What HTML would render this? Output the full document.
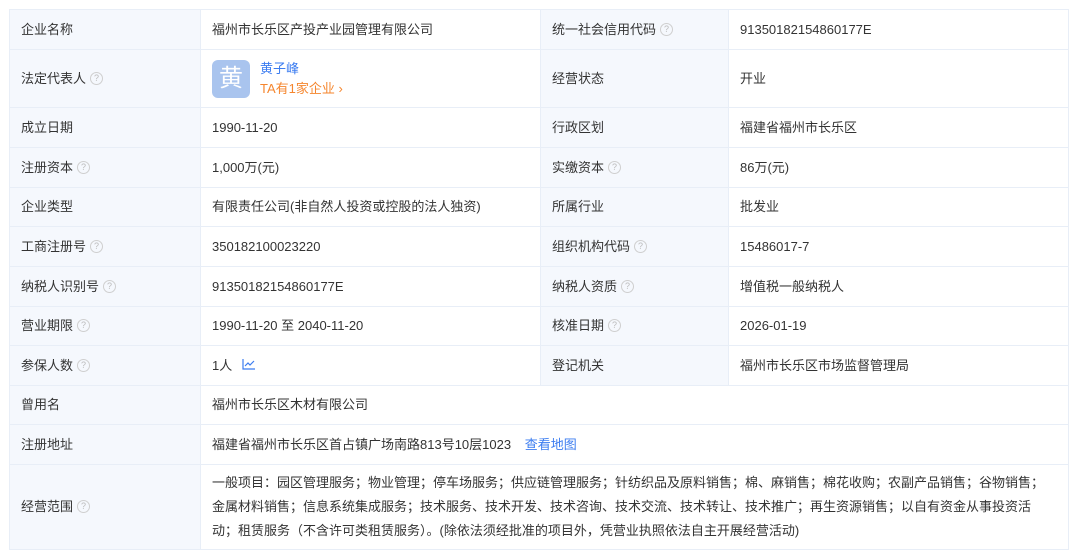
<!DOCTYPE html>
<html><head><meta charset="utf-8"><style>
body{margin:0;background:#fff;width:1080px;height:555px;overflow:hidden;font-family:"Liberation Sans","Noto Sans CJK SC",sans-serif;font-size:13px;color:#333}
table{position:absolute;left:9px;top:9px;border-collapse:collapse;table-layout:fixed;width:1059px}
td{border:1px solid #e8eef7;padding:0 0 0 11px;vertical-align:middle;line-height:18px}
td.l{background:#f5f8fd;color:#333}
.q{display:inline-block;box-sizing:border-box;width:13px;height:13px;border:1px solid #cfcfcf;border-radius:50%;font-size:9px;line-height:11px;text-align:center;color:#bbb;margin-left:4px;vertical-align:middle;position:relative;top:-1px}
.a{color:#3b7cf0}
.o{color:#f5862e}
</style></head><body>
<table>
<colgroup><col style="width:191px"><col style="width:340px"><col style="width:188px"><col style="width:340px"></colgroup>
<tr style="height:40px"><td class="l">企业名称</td><td>福州市长乐区产投产业园管理有限公司</td><td class="l">统一社会信用代码<span class="q">?</span></td><td>91350182154860177E</td></tr>
<tr style="height:58px"><td class="l">法定代表人<span class="q">?</span></td><td><div style="display:flex;align-items:center"><div style="width:38px;height:38px;border-radius:6px;background:#a9c4ee;color:#fff;font-size:24px;text-align:center;line-height:38px;margin-right:10px">黄</div><div><div class="a" style="line-height:20px">黄子峰</div><div class="o" style="line-height:20px">TA有1家企业 ›</div></div></div></td><td class="l">经营状态</td><td>开业</td></tr>
<tr style="height:40px"><td class="l">成立日期</td><td>1990-11-20</td><td class="l">行政区划</td><td>福建省福州市长乐区</td></tr>
<tr style="height:40px"><td class="l">注册资本<span class="q">?</span></td><td>1,000万(元)</td><td class="l">实缴资本<span class="q">?</span></td><td>86万(元)</td></tr>
<tr style="height:39px"><td class="l">企业类型</td><td>有限责任公司(非自然人投资或控股的法人独资)</td><td class="l">所属行业</td><td>批发业</td></tr>
<tr style="height:40px"><td class="l">工商注册号<span class="q">?</span></td><td>350182100023220</td><td class="l">组织机构代码<span class="q">?</span></td><td>15486017-7</td></tr>
<tr style="height:40px"><td class="l">纳税人识别号<span class="q">?</span></td><td>91350182154860177E</td><td class="l">纳税人资质<span class="q">?</span></td><td>增值税一般纳税人</td></tr>
<tr style="height:39px"><td class="l">营业期限<span class="q">?</span></td><td>1990-11-20 至 2040-11-20</td><td class="l">核准日期<span class="q">?</span></td><td>2026-01-19</td></tr>
<tr style="height:40px"><td class="l">参保人数<span class="q">?</span></td><td>1人 <svg width="14" height="12" viewBox="0 0 14 12" style="margin-left:6px;vertical-align:0"><path d="M1 1V11H13M3 8L6 5L8 7L12 3" fill="none" stroke="#3b7cf0" stroke-width="1.2"/></svg></td><td class="l">登记机关</td><td>福州市长乐区市场监督管理局</td></tr>
<tr style="height:39px"><td class="l">曾用名</td><td colspan="3">福州市长乐区木材有限公司</td></tr>
<tr style="height:40px"><td class="l">注册地址</td><td colspan="3">福建省福州市长乐区首占镇广场南路813号10层1023 <span class="a" style="margin-left:10px">查看地图</span></td></tr>
<tr style="height:85px"><td class="l">经营范围<span class="q">?</span></td><td colspan="3" style="line-height:24px;padding-right:12px">一般项目：园区管理服务；物业管理；停车场服务；供应链管理服务；针纺织品及原料销售；棉、麻销售；棉花收购；农副产品销售；谷物销售；金属材料销售；信息系统集成服务；技术服务、技术开发、技术咨询、技术交流、技术转让、技术推广；再生资源销售；以自有资金从事投资活动；租赁服务（不含许可类租赁服务）。(除依法须经批准的项目外，凭营业执照依法自主开展经营活动)</td></tr>
</table>
</body></html>
